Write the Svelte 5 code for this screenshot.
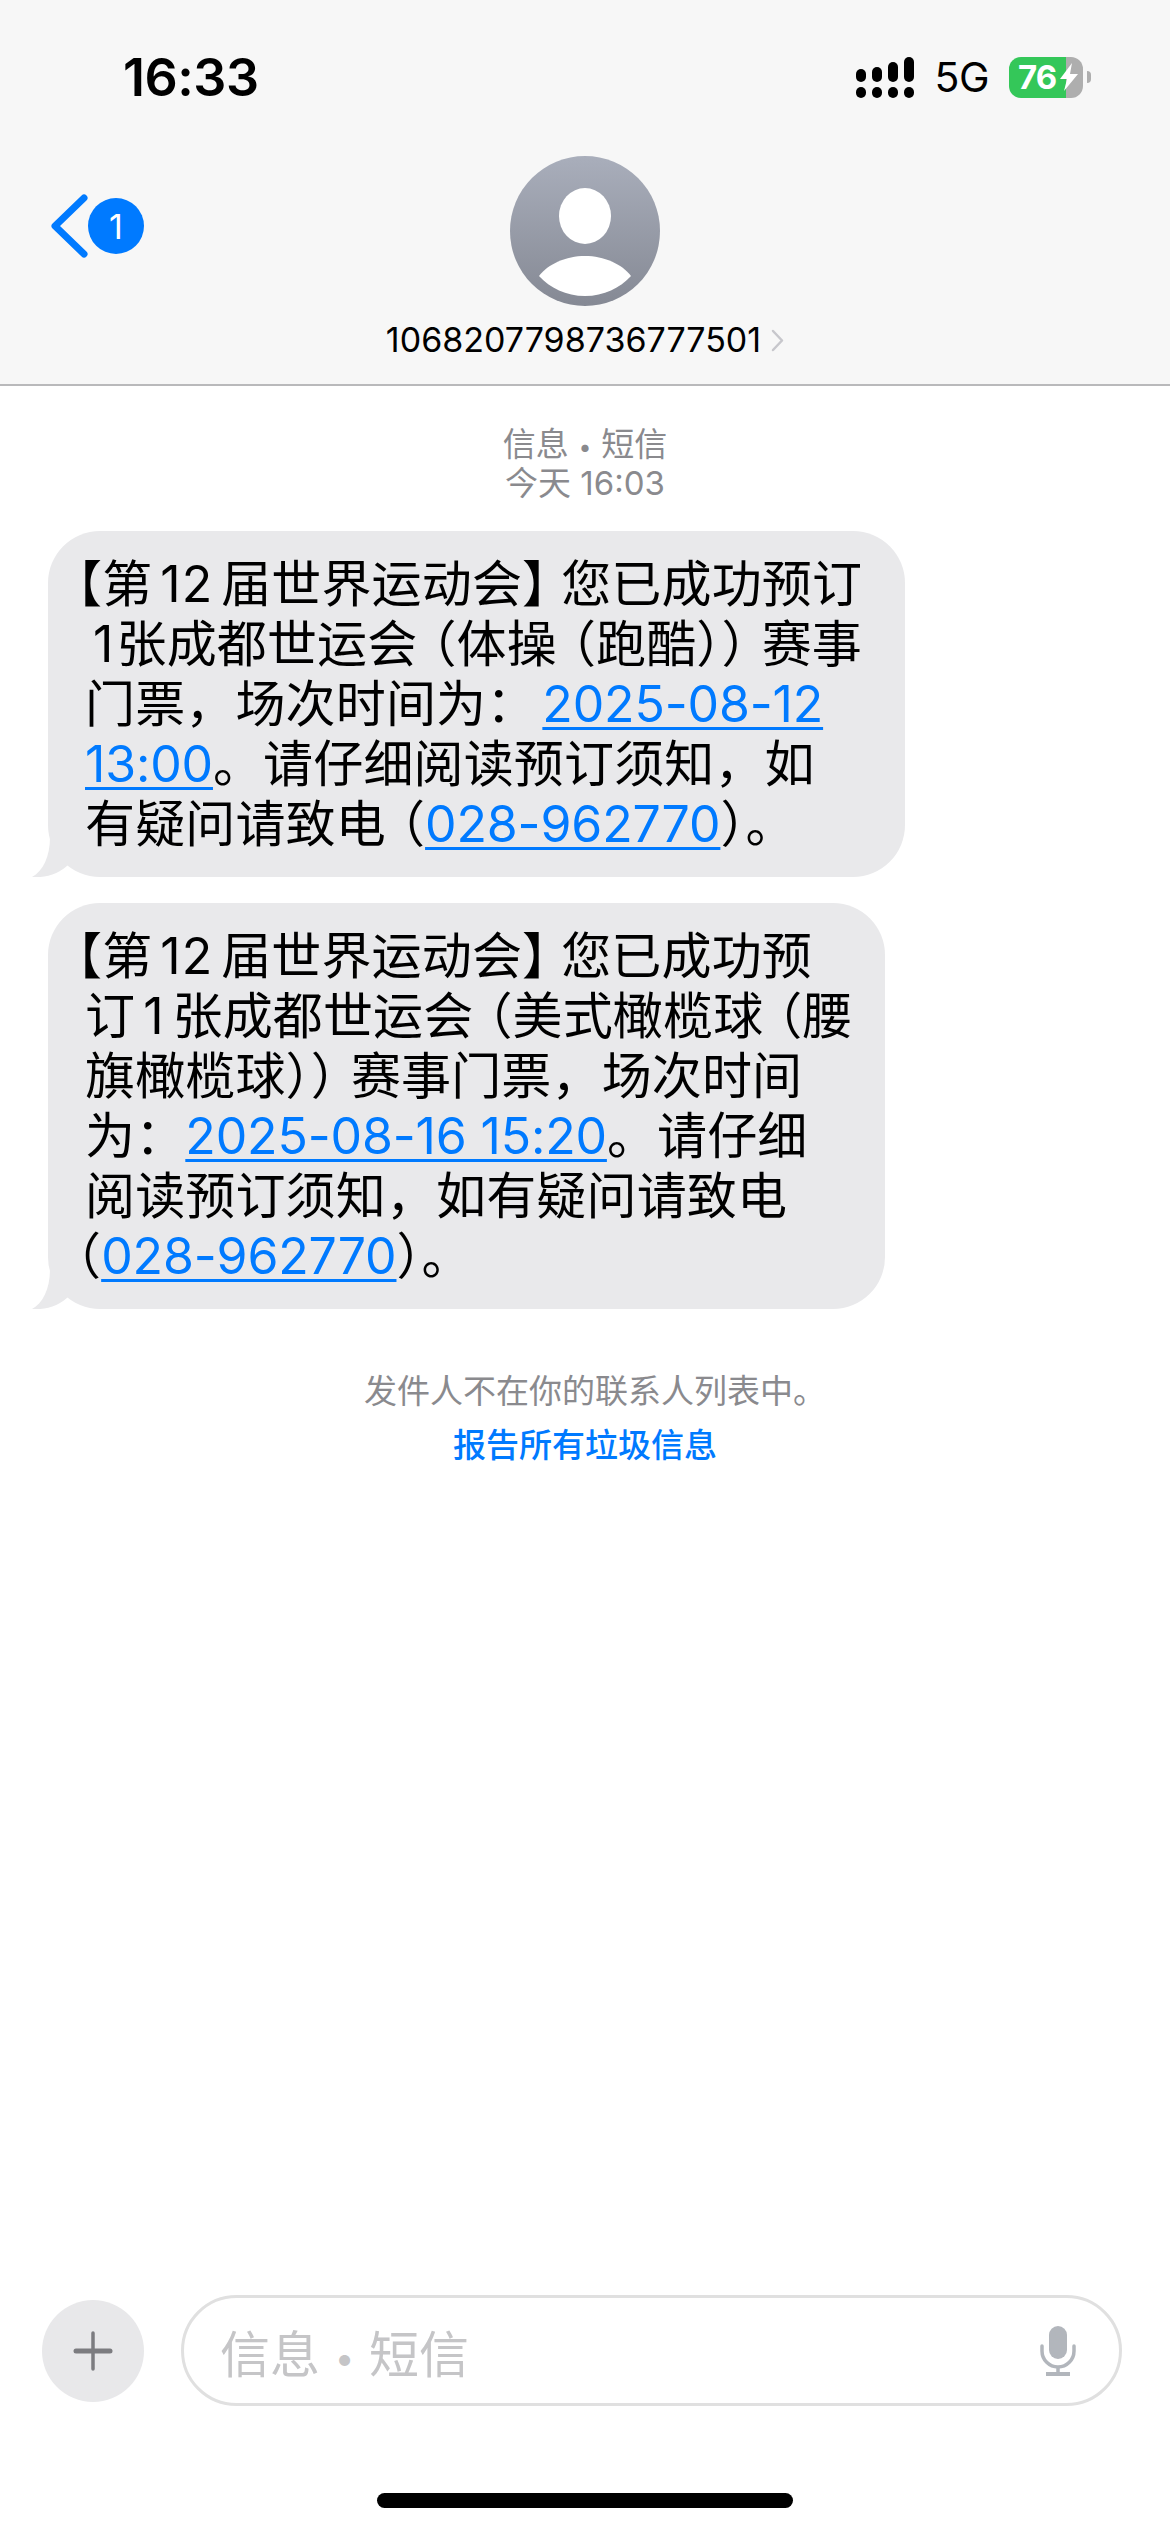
<script lang="ts">
  const bars = [13, 15, 20, 25];
</script>

<div class="phone">
  <header class="top">
    <div class="status">
      <span class="clock">16:33</span>
      <div class="indicators">
        <div class="signal">
          {#each bars as h}
            <div class="signal-col">
              <i style="height:{h}px"></i>
              <i class="dot"></i>
            </div>
          {/each}
        </div>
        <span class="net">5G</span>
        <div class="battery">
          <div class="battery-body">
            <span class="level">76</span>
            <svg class="bolt" width="20" height="28" viewBox="0 0 20 28">
              <path d="M13 0 1 16h7l-3 12 14-17h-8z" fill="#fff"/>
            </svg>
          </div>
          <div class="battery-cap"></div>
        </div>
      </div>
    </div>

    <div class="contact">
      <div class="back">
        <svg width="38" height="64" viewBox="0 0 38 64" fill="none">
          <path d="M34 4 5 32l29 28" stroke="#007aff" stroke-width="7" stroke-linecap="round" stroke-linejoin="round"/>
        </svg>
        <span class="badge">1</span>
      </div>
      <svg class="avatar" width="150" height="150" viewBox="0 0 150 150">
        <defs>
          <linearGradient id="av" x1="0" y1="0" x2="0" y2="1">
            <stop offset="0" stop-color="#a9aebb"/>
            <stop offset="1" stop-color="#858994"/>
          </linearGradient>
        </defs>
        <circle cx="75" cy="75" r="75" fill="url(#av)"/>
        <ellipse cx="75" cy="60" rx="26" ry="28" fill="#fff"/>
        <path d="M29 120C38 108 56 100 75 100s37 8 46 20c-11 12-27 20-46 20s-35-8-46-20z" fill="#fff"/>
      </svg>
      <div class="number">
        <span>1068207798736777501</span>
        <svg width="13" height="23" viewBox="0 0 13 23" fill="none">
          <path d="M2 2l9 9.500-9 9.500" stroke="#c7c7cc" stroke-width="2.500" stroke-linecap="round" stroke-linejoin="round"/>
        </svg>
      </div>
    </div>
  </header>

  <main class="thread">
    <div class="stamp">
      <div>信息<span class="sep">•</span>短信</div>
      <div>今天 16:03</div>
    </div>

    <div class="bubble first">
      <span class="hw start">【</span>第<span class="lat">12</span>届世界运动会<span class="hw end">】</span>您已成功预订<br />
      <span class="lead">1</span>张成都世运会<span class="hw op">（</span>体操<span class="hw op">（</span>跑酷<span class="hw">）</span><span class="hw cl">）</span>赛事<br />
      门票，场次时间为：<a class="gap" href="#d1">2025-08-12</a><br />
      <a href="#d1">13:00</a>。请仔细阅读预订须知，如<br />
      有疑问请致电<span class="hw op">（</span><a href="#t1">028-962770</a>）。
      <svg class="tail" width="40" height="40" viewBox="0 0 40 40">
        <path d="M18 0C18 20 11 34 0 40c14 1 28-3 38-14V0z" fill="#e9e9eb"/>
      </svg>
    </div>

    <div class="bubble second">
      <span class="hw start">【</span>第<span class="lat">12</span>届世界运动会<span class="hw end">】</span>您已成功预<br />
      订<span class="lat">1</span>张成都世运会<span class="hw op">（</span>美式橄榄球<span class="hw op">（</span>腰<br />
      旗橄榄球<span class="hw">）</span><span class="hw cl">）</span>赛事门票，场次时间<br />
      为：<a href="#d2">2025-08-16 15:20</a>。请仔细<br />
      阅读预订须知，如有疑问请致电<br />
      <span class="hw open">（</span><a href="#t2">028-962770</a>）。
      <svg class="tail" width="40" height="40" viewBox="0 0 40 40">
        <path d="M18 0C18 20 11 34 0 40c14 1 28-3 38-14V0z" fill="#e9e9eb"/>
      </svg>
    </div>

    <p class="notice">发件人不在你的联系人列表中。</p>
    <a class="report" href="#report">报告所有垃圾信息</a>
  </main>

  <footer class="composer">
    <button class="plus" aria-label="add">
      <svg width="40" height="40" viewBox="0 0 40 40">
        <path d="M20 2v36" stroke="#7c7c80" stroke-width="3.500" stroke-linecap="round"/>
        <path d="M3 20h34" stroke="#7c7c80" stroke-width="5" stroke-linecap="round"/>
      </svg>
    </button>
    <div class="field">
      <span>信息<span class="sep">•</span>短信</span>
      <svg width="36" height="50" viewBox="0 0 36 50" fill="none">
        <rect x="9" y="0" width="18" height="33" rx="9" fill="#b2b6bc"/>
        <path d="M2 20v5a16 16 0 0 0 32 0v-5" stroke="#b2b6bc" stroke-width="3.500" stroke-linecap="round"/>
        <path d="M18 41v6" stroke="#b2b6bc" stroke-width="3.500"/>
        <path d="M6 48h24" stroke="#b2b6bc" stroke-width="4"/>
      </svg>
    </div>
  </footer>

  <div class="home-wrap"><div class="home"></div></div>
</div>

<style>
  :global(body) {
    margin: 0;
    background: #fff;
  }

  .phone {
    width: 1170px;
    height: 2532px;
    display: flex;
    flex-direction: column;
    font-family: Inter, "Noto Sans CJK SC", sans-serif;
    color: #000;
    overflow: hidden;
    background: #fff;
  }

  /* Header */
  .top {
    height: 386px;
    box-sizing: border-box;
    background: #f7f7f7;
    border-bottom: 2px solid #b9b9bb;
    padding-top: 48px;
  }

  .status {
    display: flex;
    justify-content: space-between;
    align-items: center;
    height: 58px;
    padding: 0 79px 0 123px;
  }

  .clock {
    font-size: 52px;
    font-weight: 600;
    letter-spacing: -0.5px;
  }

  .indicators {
    display: flex;
    align-items: center;
  }

  .signal {
    display: flex;
    gap: 6px;
    align-items: flex-end;
    margin-right: 20px;
  }

  .signal-col {
    display: flex;
    flex-direction: column;
    gap: 5px;
    width: 10px;
  }

  .signal-col i {
    display: block;
    background: #000;
    border-radius: 5px;
  }

  .signal-col .dot {
    height: 11px;
  }

  .net {
    font-size: 41px;
    letter-spacing: -0.5px;
    margin-right: 20px;
  }

  .battery {
    display: flex;
    align-items: center;
    gap: 4px;
  }

  .battery-body {
    width: 74px;
    height: 41px;
    box-sizing: border-box;
    border-radius: 12px;
    background: linear-gradient(90deg, #34c759 57px, #aeaeae 57px);
    display: flex;
    align-items: center;
    padding-left: 9px;
    gap: 3px;
  }

  .level {
    color: #fff;
    font-size: 33px;
    font-weight: 700;
    letter-spacing: -1px;
  }

  .battery-cap {
    width: 4px;
    height: 12px;
    background: #aeaeae;
    border-radius: 0 4px 4px 0;
  }

  .contact {
    position: relative;
    display: flex;
    flex-direction: column;
    align-items: center;
    padding-top: 50px;
  }

  .back {
    position: absolute;
    left: 50px;
    top: 88px;
    display: flex;
    align-items: center;
  }

  .badge {
    width: 56px;
    height: 56px;
    border-radius: 50%;
    background: #007aff;
    color: #fff;
    font-size: 34px;
    display: flex;
    align-items: center;
    justify-content: center;
  }

  .number {
    display: flex;
    align-items: center;
    gap: 10px;
    margin-top: 19px;
    font-size: 34px;
    line-height: 30px;
  }

  /* Messages */
  .thread {
    flex: 1;
    display: flex;
    flex-direction: column;
    padding: 39px 0 0 48px;
  }

  .stamp {
    width: 1074px;
    text-align: center;
    font-size: 33px;
    line-height: 39px;
    color: #8a8a8e;
    margin-bottom: 28px;
  }

  .stamp > div {
    height: 39px;
  }

  .sep {
    margin: 0 0.42em;
    font-size: 0.7em;
    line-height: 0;
    vertical-align: 0.05em;
  }

  .bubble {
    position: relative;
    box-sizing: border-box;
    padding: 23px 0 23px 37px;
    background: #e9e9eb;
    border-radius: 52px;
    font-size: 50px;
    line-height: 60px;
    letter-spacing: 0.15px;
    white-space: nowrap;
    margin-bottom: 26px;
  }

  .first {
    width: 857px;
  }

  .second {
    width: 837px;
  }

  .hw {
    font-feature-settings: "halt";
  }

  .start {
    margin-left: -8px;
  }

  .end {
    margin-right: 14px;
  }

  .open {
    margin-left: -9px;
  }

  .op {
    margin-left: 14px;
  }

  .cl {
    margin-right: 15px;
  }

  .lat {
    margin: 0 8px;
    letter-spacing: 1px;
  }

  .lead {
    margin: 0 3px 0 8px;
  }

  .bubble a {
    color: #007aff;
    text-decoration: underline;
    text-decoration-thickness: 3px;
    text-underline-offset: 5px;
    letter-spacing: -0.15px;
  }

  .bubble .gap {
    margin-left: 6px;
  }

  .tail {
    position: absolute;
    left: -16px;
    bottom: 0;
  }

  .notice {
    width: 1054px;
    padding-left: 20px;
    margin: 31px 0 0;
    text-align: center;
    font-size: 33px;
    line-height: 50px;
    color: #8a8a8e;
  }

  .report {
    width: 1074px;
    margin-top: 4px;
    text-align: center;
    font-size: 33px;
    font-weight: 500;
    line-height: 50px;
    color: #007aff;
    text-decoration: none;
  }

  /* Composer */
  .composer {
    display: flex;
    align-items: center;
    padding-left: 42px;
    gap: 37px;
    margin-bottom: 87px;
  }

  .plus {
    width: 102px;
    height: 102px;
    border: 0;
    padding: 0;
    border-radius: 50%;
    background: #e8e8ea;
    display: flex;
    align-items: center;
    justify-content: center;
  }

  .field {
    width: 941px;
    height: 111px;
    box-sizing: border-box;
    border: 3px solid #e0e0e0;
    border-radius: 56px;
    display: flex;
    align-items: center;
    justify-content: space-between;
    padding: 0 43px 0 36px;
    font-size: 50px;
    color: #c5c5c7;
  }

  .home-wrap {
    height: 39px;
    display: flex;
    justify-content: center;
  }

  .home {
    width: 416px;
    height: 15px;
    border-radius: 8px;
    background: #000;
  }
</style>
